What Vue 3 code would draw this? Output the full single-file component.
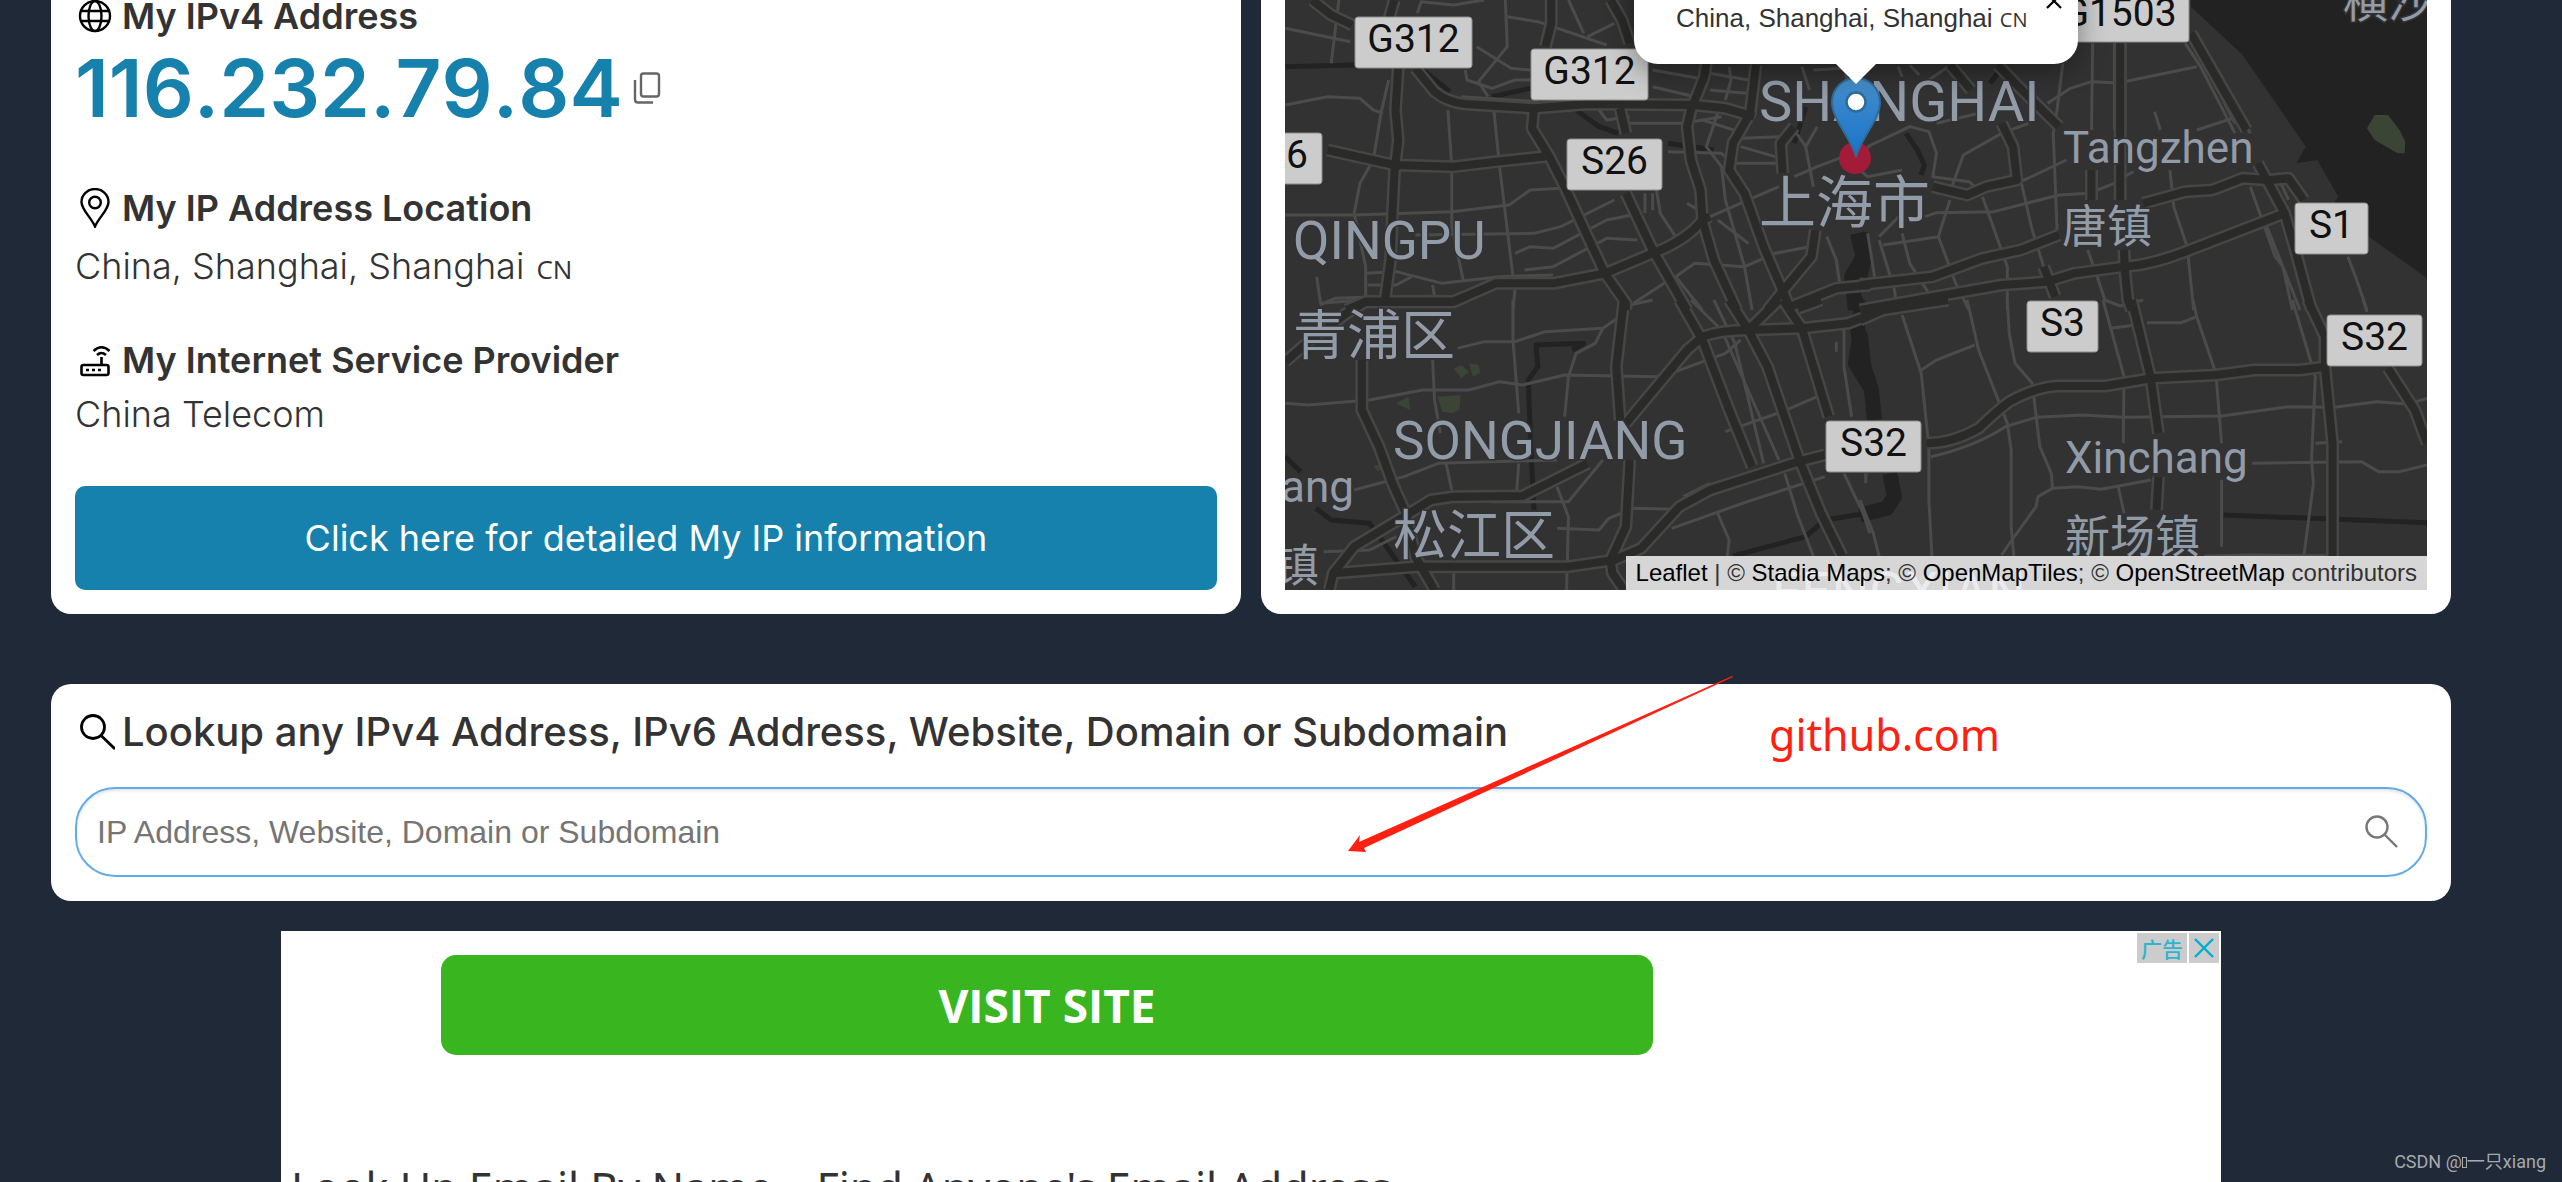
<template>
  <div class="page">
    <main class="content">
      <section class="columns">
        <div class="card info">
          <h2 class="heading">
            <svg class="icon" viewBox="0 0 40 40" fill="none" stroke="#000" stroke-width="2.4">
              <circle cx="20" cy="20" r="15" />
              <ellipse cx="20" cy="20" rx="6.5" ry="15" />
              <path d="M6 15h28M6 25h28" />
            </svg>
            My IPv4 Address
          </h2>
          <div class="ip-row">
            <span class="ip">{{ ip }}</span>
            <button class="copy" type="button" aria-label="Copy IP address" @click="copyIp">
              <svg viewBox="0 0 28 34" fill="none" stroke="#666" stroke-width="2.4">
                <rect x="8" y="2.5" width="18" height="23" rx="2.5" />
                <path d="M2 9v19.500q0 3 3 3h15" />
              </svg>
            </button>
          </div>

          <h2 class="heading spaced">
            <svg class="icon" viewBox="0 0 40 40" fill="none" stroke="#000" stroke-width="2.4">
              <path d="M20 38.500C16 29 6.500 22 6.500 14a13.500 13 0 0 1 27 0C33.500 22 24 29 20 38.500z" />
              <circle cx="20" cy="14.500" r="5.800" />
            </svg>
            My IP Address Location
          </h2>
          <p class="value location">China, Shanghai, Shanghai <span class="flag">CN</span></p>

          <h2 class="heading spaced">
            <svg class="icon" viewBox="0 0 40 40" fill="none" stroke="#000" stroke-width="2.6">
              <rect x="6.500" y="25" width="27" height="10" rx="2" />
              <path d="M26.500 25v-8M22 15q4.500-4 9 0M18.500 11q8-7.500 16 0" />
              <path d="M11 30h3M17 30h3M23 30h3" />
            </svg>
            My Internet Service Provider
          </h2>
          <p class="value">China Telecom</p>
          <a class="details" href="#details">Click here for detailed My IP information</a>
        </div>

        <div class="card map-card">
          <div class="map">
            <svg class="canvas" viewBox="1285 0 1142 590" preserveAspectRatio="xMidYMid slice">
              <rect x="1285" width="1142" height="590" fill="#323232" />
              <g v-for="layer in layers" :key="layer.name" :class="layer.name">
                <g v-for="tile in tiles" :key="tile.origin" :transform="`translate(${tile.origin}) scale(.38265 .33333)`">
                  <path v-for="d in tile[layer.source]" :key="d" :d="d" />
                </g>
              </g>
              <g class="places">
                <text v-for="p in places" :key="p.name" :x="p.x" :y="p.y" :font-size="p.size">{{ p.name }}</text>
              </g>
              <g v-for="s in shields" :key="s.x" class="shield">
                <rect :x="s.x" :y="s.y" :width="s.w" height="51" rx="3" />
                <text :x="s.x + s.w / 2" :y="s.y + 35">{{ s.name }}</text>
              </g>
              <circle cx="1855" cy="158" r="16" fill="#a31b38" />
              <defs>
                <linearGradient id="pin" x1="0" y1="0" x2="0" y2="1">
                  <stop offset="0" stop-color="#468fca" />
                  <stop offset="1" stop-color="#1872cb" />
                </linearGradient>
              </defs>
              <path
                d="M1856 157C1851 137 1832 120 1832 102a24 24 0 0 1 48 0C1880 120 1861 137 1856 157z"
                fill="url(#pin)"
                stroke="#2e6c97"
                stroke-width="2"
              />
              <circle cx="1856" cy="102" r="9.500" fill="#fff" stroke="#2e6c97" stroke-width="2.5" />
            </svg>
            <div class="popup">
              China, Shanghai, Shanghai <span class="flag">CN</span>
              <button class="close" type="button" aria-label="Close popup">
                <svg viewBox="0 0 16 16" stroke="#000" stroke-width="2.2"><path d="M1 1l14 14M15 1L1 15" /></svg>
              </button>
            </div>
            <div class="attribution">
              <a href="#leaflet">Leaflet</a> | © <a href="#stadia">Stadia Maps</a>; ©
              <a href="#tiles">OpenMapTiles</a>; © <a href="#osm">OpenStreetMap</a> contributors
            </div>
          </div>
        </div>
      </section>

      <form class="card lookup" @submit.prevent>
        <label class="lookup-title" for="lookup">
          <svg class="icon" viewBox="0 0 40 40" fill="none" stroke="#000" stroke-width="2.8">
            <circle cx="18" cy="15" r="11.500" />
            <path d="M26 23.500L40 37" />
          </svg>
          Lookup any IPv4 Address, IPv6 Address, Website, Domain or Subdomain
        </label>
        <div class="field">
          <input id="lookup" v-model="query" type="text" placeholder="IP Address, Website, Domain or Subdomain" />
          <button class="search" type="submit" aria-label="Search">
            <svg viewBox="0 0 34 34" fill="none" stroke="#777" stroke-width="2.4">
              <circle cx="12" cy="12" r="10.500" />
              <path d="M19.500 19.500L32 32" />
            </svg>
          </button>
        </div>
        <svg class="arrow" viewBox="0 0 386 178" fill="#ff2012">
          <path d="M0 176L12 160 11 167 384 1 385 2 16 173 18 177z" />
        </svg>
        <span class="note">github.com</span>
      </form>

      <aside class="ad">
        <div class="ad-badges">
          <span class="badge">广告</span>
          <button class="badge" type="button" aria-label="Close ad">
            <svg viewBox="0 0 30 30" stroke="#00aecd" stroke-width="2.4"><path d="M6 6l18 18M24 6L6 24" /></svg>
          </button>
        </div>
        <a class="visit" href="#visit">VISIT SITE</a>
        <p class="ad-title">Look Up Email By Name – Find Anyone's Email Address</p>
      </aside>
    </main>
    <div class="watermark">CSDN @<i class="missing"></i>一只xiang</div>
  </div>
</template>

<script setup>
import { ref } from 'vue';

const ip = ref('116.232.79.84');
const query = ref('');

function copyIp() {
  navigator.clipboard?.writeText(ip.value);
}

// paint order of the map, bottom to top
const layers = [
  { name: 'sea', source: 'sea' },
  { name: 'park', source: 'park' },
  { name: 'river', source: 'river' },
  { name: 'canal', source: 'canal' },
  { name: 'minor', source: 'minor' },
  { name: 'casing', source: 'major' },
  { name: 'major', source: 'major' },
];

const tiles = [
  {
    origin: '1270 0',
    river: ['M1535 700L1550 770 1520 830 1530 930'],
    canal: ['M40 200L220 195', 'M400 210L470 275', 'M580 290L680 265', 'M800 330L860 380 910 400', 'M1040 430L1160 450', 'M1400 320L1370 430'],
    minor: [
      'M40 315L150 290 235 295 270 330 295 340',
      'M310 240L290 340 270 480 235 550 220 640 250 800V890',
      'M465 330L475 500V680L505 840',
      'M585 330L600 500 635 830',
      'M40 645H220L475 635 625 615 680 570 760 565',
      'M380 705L690 700 760 680 900 600',
      'M640 760L680 740 740 745 880 660 970 640',
      'M665 810L740 800 880 715 960 720',
      'M40 85L210 125M180 0L160 190',
      'M385 40L395 5 480 15 560 0',
      'M620 50L700 65 880 135M830 110L900 70M780 0L820 100',
      'M615 0L620 140 545 245 570 290M540 140L630 205 680 210',
      'M510 210L515 240 580 265 640 240H680',
      'M250 820L330 815 450 850 600 830 740 825',
      'M255 855H330L370 830M425 855L430 890M122 830L132 910M640 870L635 930',
      'M130 915L170 895 240 892M500 290L700 305',
      'M860 330L880 360 940 350M940 370L1080 370 1180 350',
      'M1000 210L1120 235M1000 260L1110 290',
      'M1200 200L1205 240 1190 300M1150 220L1250 240M1150 270L1245 280',
      'M1130 360L1240 400M1230 415L1340 410M1230 440L1320 470',
      'M1040 455L1180 460 1210 490 1340 490',
      'M1170 340L1140 440 1180 500 1190 600 1240 800 1260 930',
      'M1010 570L1020 640 1060 710M1090 610L1150 650 1250 600 1330 560',
      'M1060 830L1110 790 1240 800 1320 760 1410 740',
      'M950 910L1030 850M1370 390L1400 440 1430 380M1370 530L1430 500 1568 440',
      'M1455 710L1480 780 1490 860M1400 440L1420 560M980 580V640M1000 580V630',
      'M1250 730L1170 660M1030 850L1060 830 1130 930',
      'M1390 200L1410 270M1500 200L1510 250M1420 210L1560 200',
    ],
    major: [
      'M325 0L310 60M335 205L328 330 335 420 325 520 320 640 315 780 300 905',
      'M110 0L160 45 215 75M380 205L430 275Q460 305 510 312L690 325 830 312 1110 315 1190 325 1265 350',
      'M735 0V70L720 140',
      'M890 0L920 60 940 130',
      'M690 325L685 385 730 470 770 560 830 710 875 820 930 910V930',
      'M150 450L325 495 480 500 590 485 730 468',
      'M915 325L930 400M930 580L1000 750 1090 930',
      'M200 930L250 905H480L590 850H740L875 820 1000 760Q1090 720 1130 660L1150 650',
      'M1140 190L1135 230 1100 330 1090 380 1100 480 1125 570 1130 660 1160 780 1220 930',
      'M1270 195L1255 340 1210 430 1200 510 1240 580 1290 740 1350 900 1360 930',
      'M1425 690L1415 770 1335 880 1300 930',
      'M1360 920L1480 865 1568 855',
      'M1370 380L1335 430 1340 520',
    ],
  },
  {
    origin: '1860 0',
    sea: ['M865 0V20L1000 165 1165 440 1140 490 1195 480 1250 590 1240 605 1330 710 1482 835V0z'],
    park: ['M1345 345H1380L1410 390 1425 425 1423 460H1405L1345 420 1325 385z'],
    river: ['M0 700L12 770 0 830'],
    canal: ['M120 400L150 450 168 495 160 525', 'M340 250L360 220'],
    minor: [
      'M608 130L605 390M665 130V390M692 130V390',
      'M530 190L515 330 505 400 515 690',
      'M490 310L550 265 605 245 665 248M690 245L880 200',
      'M850 130L890 200 980 400M900 190L980 370M880 100L1020 400',
      'M880 390L1000 345M770 335L785 390M810 510L820 620 855 740 872 930',
      'M620 570L665 550M690 530L715 515M420 545L540 480M420 540L450 690 480 800',
      'M170 650L200 638 350 635 520 585 600 580',
      'M235 600L205 710 250 850 285 930M60 735L205 710M320 590L385 800V930',
      'M20 440L130 380 180 395 200 460 190 530 285 545 300 560',
      'M240 560L270 465 370 400 440 370M0 510L20 530 110 510',
      'M110 700L130 790 180 880M50 720L90 870 95 910M20 700L38 830M50 710L110 640',
      'M1020 560L1085 770 1105 800 1130 930M1060 670L1150 930M1100 550L1120 600',
      'M1275 770L1295 830 1325 930M595 750L620 830 640 900 680 918 740 900',
      'M100 200L110 230M130 195L155 225M180 240L230 200M200 370L310 340',
    ],
    major: [
      'M680 130V600M690 750L692 810 700 900 710 930',
      'M605 510V600',
      'M865 100L1010 390M1040 490L1110 640 1135 740 1180 930',
      'M1070 540L1120 535 1160 600',
      'M740 610L850 575 920 570 1000 535 1070 540',
      'M0 855L190 830 320 775 420 750 520 705',
      'M0 930L370 855 490 845 560 820 690 800Q760 795 850 755L1110 640',
      'M480 800L510 890',
      'M360 195L410 255 520 380M370 370L400 440 410 540 330 560 280 585 190 560',
      'M235 195L290 270',
    ],
  },
  {
    origin: '1270 300',
    park: [
      'M480 205L500 195 520 215 500 235zM520 190L545 195 550 220 530 230z',
      'M330 310L362 290 366 330z',
      'M438 290L498 285 495 330 475 340 450 335z',
      'M270 500L290 490 285 515z',
    ],
    river: ['M1530 0L1545 30 1535 80 1540 120 1530 190 1568 260'],
    canal: [
      'M690 135L820 130 790 150',
      'M695 135L700 200 675 240 680 400 690 630',
      'M40 470L80 515M120 625L160 660 260 670 380 860',
      'M1210 768L1400 710 1450 660 1560 640',
    ],
    minor: [
      'M40 310L100 315 260 300 400 270H520L600 245 660 255 770 225 1010 230 1060 215 1190 160 1230 120',
      'M490 145L560 125H640L720 95 870 85 920 45',
      'M635 0V120L650 340M425 180L430 300 445 400',
      'M870 85L850 130 800 160 780 230 770 350',
      'M220 570L350 530 440 490 750 480M460 490L475 570M650 490L645 570',
      'M580 605H780L870 480M750 560L780 650 775 870M480 820V870',
      'M750 685L860 690 885 655 950 625 1060 628',
      'M1050 685L1260 600 1450 530M1170 640L1200 720 1195 768M1345 520L1380 650 1420 768',
      'M1190 395L1350 330 1430 290M1100 0L1180 90 1330 480M1160 0L1215 130 1290 490',
      'M1500 80V200L1520 350M1500 520L1550 640 1568 700M140 755L260 750 330 710',
      'M130 10L240 0M940 15L1000 0M1080 590L1150 550M1480 125V155',
    ],
    major: [
      'M40 185L100 125 200 40 250 5H480L510 -10',
      'M240 180V330L285 440 320 550 355 640 380 770 430 870',
      'M155 870L165 820 220 740 350 650 420 600 480 590 660 588 830 490M930 370L1090 150 1130 110Q1180 90 1250 90L1390 85 1510 70 1568 45',
      'M925 0L905 200 915 360M940 480L930 680 890 780 895 820 925 870',
      'M165 820L380 800H780L900 780 970 745 1070 620 1150 570 1380 485 1450 465',
      'M1070 0L1130 120 1200 330 1260 500',
      'M1200 0L1250 90 1300 200 1385 485 1440 640 1495 768',
      'M1250 90L1330 0M1340 0L1390 85 1460 350M1380 25L1440 0',
    ],
  },
  {
    origin: '1860 300',
    river: ['M0 100L10 200 30 270 38 360', 'M78 520L90 590 70 625 0 645'],
    canal: ['M950 645L1482 668'],
    minor: [
      'M110 45L160 220 180 440V600L188 768M160 210L200 180 300 135',
      'M280 0L310 150 385 370 395 450V680L402 768',
      'M385 0L390 100 405 190 450 250 470 440 500 520 503 565 465 590 460 620 400 715 370 765',
      'M503 565L570 560 630 568 760 540M675 560L690 640',
      'M185 470Q300 440 380 380L460 352 580 345 690 352 945 348 1120 320 1240 322 1350 305 1430 312 1482 295',
      'M635 0L690 230 688 430M870 0L880 50 930 220 945 430M945 540V740',
      'M655 85L720 75M750 68H840L880 50',
      'M1130 0L1190 230 1180 480 1185 550 1160 768',
      'M1025 490L1310 485 1355 515H1410L1482 495M1190 430L1260 425',
      'M1315 0L1325 35M15 520V550M0 600L35 700 50 768M900 768L1020 765 1250 768',
    ],
    major: [
      'M0 60L60 30 230 0',
      'M175 430Q240 430 310 385Q360 330 390 305Q460 260 520 258H640L760 235 930 225 1030 210H1150L1215 200',
      'M710 0L760 235 780 400M780 530L775 630',
      'M1170 0L1215 110V200L1235 430V768',
      'M1380 205L1450 330 1482 430',
    ],
  },
];

const places = [
  { name: 'QINGPU', x: 1293, y: 259, size: 53 },
  { name: '青浦区', x: 1293, y: 355, size: 54 },
  { name: 'SHANGHAI', x: 1759, y: 121, size: 56 },
  { name: '上海市', x: 1759, y: 223, size: 57 },
  { name: 'Tangzhen', x: 2063, y: 163, size: 44 },
  { name: '唐镇', x: 2062, y: 243, size: 45 },
  { name: 'SONGJIANG', x: 1393, y: 459, size: 53 },
  { name: '松江区', x: 1393, y: 555, size: 54 },
  { name: 'ang', x: 1281, y: 502, size: 44 },
  { name: '镇', x: 1274, y: 582, size: 45 },
  { name: 'Xinchang', x: 2065, y: 473, size: 44 },
  { name: '新场镇', x: 2065, y: 553, size: 45 },
  { name: 'FENGXIAN', x: 1772, y: 610, size: 53 },
  { name: '横沙', x: 2343, y: 18, size: 45 },
];

const shields = [
  { name: 'G312', x: 1355, y: 17, w: 117 },
  { name: 'G312', x: 1531, y: 49, w: 117 },
  { name: 'G1503', x: 2050, y: -9, w: 139 },
  { name: 'S26', x: 1567, y: 139, w: 95 },
  { name: 'S26', x: 1227, y: 133, w: 95 },
  { name: 'S1', x: 2295, y: 203, w: 73 },
  { name: 'S3', x: 2027, y: 301, w: 71 },
  { name: 'S32', x: 2327, y: 315, w: 95 },
  { name: 'S32', x: 1826, y: 421, w: 95 },
];
</script>

<style>
body {
  margin: 0;
  background: #202938;
}
</style>

<style scoped>
.page {
  position: relative;
  box-sizing: border-box;
  height: 100vh;
  padding: 0 111px 0 51px;
  overflow: hidden;
  background: #202938;
  color: #333;
  font-family: Inter, sans-serif;
}
.content {
  display: flex;
  flex-direction: column;
  height: 100%;
}
.columns {
  display: grid;
  grid-template-columns: 1fr 1fr;
  gap: 20px;
  height: 614px;
  flex: none;
}
.card {
  box-sizing: border-box;
  padding: 24px;
  background: #fff;
  border-radius: 20px;
}
.columns .card {
  padding-top: 0;
  border-radius: 0 0 20px 20px;
}
.info {
  display: flex;
  flex-direction: column;
  justify-content: flex-end;
  min-width: 0;
  overflow: hidden;
}
.heading {
  display: flex;
  align-items: center;
  gap: 7px;
  margin: 0;
  font-size: 36px;
  font-weight: 600;
  line-height: 44px;
}
.spaced {
  margin-top: 33px;
}
.ip-row + .spaced {
  margin-top: 48px;
}
.icon {
  width: 40px;
  height: 40px;
  flex: none;
}
.ip-row {
  display: flex;
  align-items: center;
  gap: 10px;
}
.ip {
  color: #1581ac;
  font-size: 80px;
  font-weight: 600;
  font-kerning: none;
  line-height: 100px;
}
button {
  padding: 0;
  border: 0;
  background: none;
  cursor: pointer;
}
button svg {
  display: block;
  width: 100%;
}
.copy {
  width: 28px;
}
.value {
  margin: 0;
  font-size: 36px;
  font-weight: 350;
  line-height: 64px;
}
.location {
  line-height: 72px;
}
.flag {
  margin-left: 2px;
  font-family: 'Open Sans', sans-serif;
  font-size: 26px;
  font-weight: 400;
}
.details {
  margin-top: 40px;
  border-radius: 10px;
  background: #1581ac;
  color: #fff;
  font-size: 36px;
  line-height: 104px;
  text-align: center;
  text-decoration: none;
}
.map {
  position: relative;
  height: 590px;
  overflow: hidden;
  background: #323232;
  font-family: 'Liberation Sans', Arial, sans-serif;
}
.canvas {
  display: block;
  width: 100%;
  height: 100%;
}
.canvas path {
  vector-effect: non-scaling-stroke;
}
.sea {
  fill: #222;
}
.park {
  fill: #3b4535;
}
.river,
.canal,
.minor,
.casing,
.major {
  fill: none;
  stroke-linejoin: round;
}
.river {
  stroke: #222;
  stroke-width: 15px;
}
.canal {
  stroke: #222;
  stroke-width: 5px;
}
.minor {
  stroke: #4b4b4b;
  stroke-width: 3px;
}
.casing {
  stroke: #464646;
  stroke-width: 13px;
}
.major {
  stroke: #2a2a28;
  stroke-width: 8px;
}
.places {
  fill: #929ba8;
  stroke: #323232;
  stroke-width: 3px;
  paint-order: stroke;
  font-family: Roboto, 'Noto Sans CJK SC', sans-serif;
}
.shield rect {
  fill: #ccc;
  stroke: #8d8d8d;
  stroke-width: 1px;
}
.shield text {
  fill: #111;
  font-family: Roboto, sans-serif;
  font-size: 39px;
  text-anchor: middle;
}
.popup {
  position: absolute;
  bottom: 526px;
  left: 50%;
  box-sizing: border-box;
  width: 444px;
  padding: 40px 42px 27px;
  transform: translateX(-50%);
  border-radius: 24px;
  background: #fff;
  box-shadow: 0 6px 28px rgba(0, 0, 0, 0.4);
  font-size: 26px;
  line-height: 34px;
  white-space: nowrap;
}
.popup::after {
  position: absolute;
  top: 100%;
  left: 50%;
  border: 20px solid transparent;
  border-top-color: #fff;
  border-bottom: 0;
  content: '';
  transform: translateX(-50%);
}
.popup .flag {
  margin-left: 0;
  font-size: 20px;
}
.close {
  position: absolute;
  right: 16px;
  bottom: 55px;
  width: 16px;
}
.attribution {
  position: absolute;
  right: 0;
  bottom: 0;
  padding: 0 10px;
  background: rgba(255, 255, 255, 0.8);
  font-size: 24px;
  line-height: 34px;
}
.attribution a {
  color: #000;
  text-decoration: none;
}
.lookup {
  position: relative;
  flex: none;
  margin-top: 70px;
}
.lookup-title {
  display: flex;
  align-items: center;
  gap: 7px;
  margin-bottom: 31px;
  font-size: 40px;
  font-weight: 500;
  line-height: 48px;
}
.field {
  display: flex;
  align-items: center;
  box-sizing: border-box;
  height: 90px;
  padding: 0 26px 0 20px;
  border: 2px solid #63abe6;
  border-radius: 40px;
  box-shadow: inset 0 2px 3px rgba(0, 0, 0, 0.1);
}
.field input {
  flex: 1;
  min-width: 0;
  padding: 0;
  border: 0;
  outline: 0;
  background: none;
  font: 32px 'Liberation Sans', Arial, sans-serif;
}
.field input::placeholder {
  color: #757575;
  opacity: 1;
}
.search {
  width: 34px;
}
.arrow {
  position: absolute;
  top: -9px;
  left: 1297px;
  width: 386px;
  pointer-events: none;
}
.note {
  position: absolute;
  top: 21px;
  left: 1718px;
  color: #ff2012;
  font-family: 'Noto Sans', sans-serif;
  font-size: 43px;
  line-height: 60px;
}
.ad {
  position: relative;
  box-sizing: border-box;
  flex: 1;
  min-height: 0;
  margin: 30px 230px 0;
  padding: 24px 10px 0;
  overflow: hidden;
  background: #fff;
}
.ad-badges {
  position: absolute;
  top: 2px;
  right: 2px;
  display: flex;
  gap: 2px;
}
.badge {
  width: 30px;
  height: 30px;
  background: #ccc;
  color: #2fb4cf;
  font-family: 'Noto Sans CJK SC', sans-serif;
  font-size: 21px;
  font-weight: 500;
  line-height: 30px;
}
span.badge {
  width: 50px;
  text-align: center;
}
.visit {
  display: block;
  width: 1212px;
  margin-left: 150px;
  border-radius: 15px;
  background: #39b51f;
  color: #fff;
  font-family: 'Open Sans', sans-serif;
  font-size: 46px;
  font-weight: 700;
  line-height: 100px;
  text-align: center;
  text-decoration: none;
}
.ad-title {
  margin: 103px 0 0;
  font-family: 'Noto Sans', sans-serif;
  font-size: 43px;
  line-height: 60px;
  white-space: nowrap;
}
.watermark {
  position: absolute;
  right: 16px;
  bottom: 6px;
  display: flex;
  align-items: center;
  color: #a6aaaf;
  font-family: Roboto, 'Noto Sans CJK SC', sans-serif;
  font-size: 18px;
  line-height: 28px;
}
.missing {
  width: 3px;
  height: 9px;
  border: 1px solid #a6aaaf;
}
</style>
